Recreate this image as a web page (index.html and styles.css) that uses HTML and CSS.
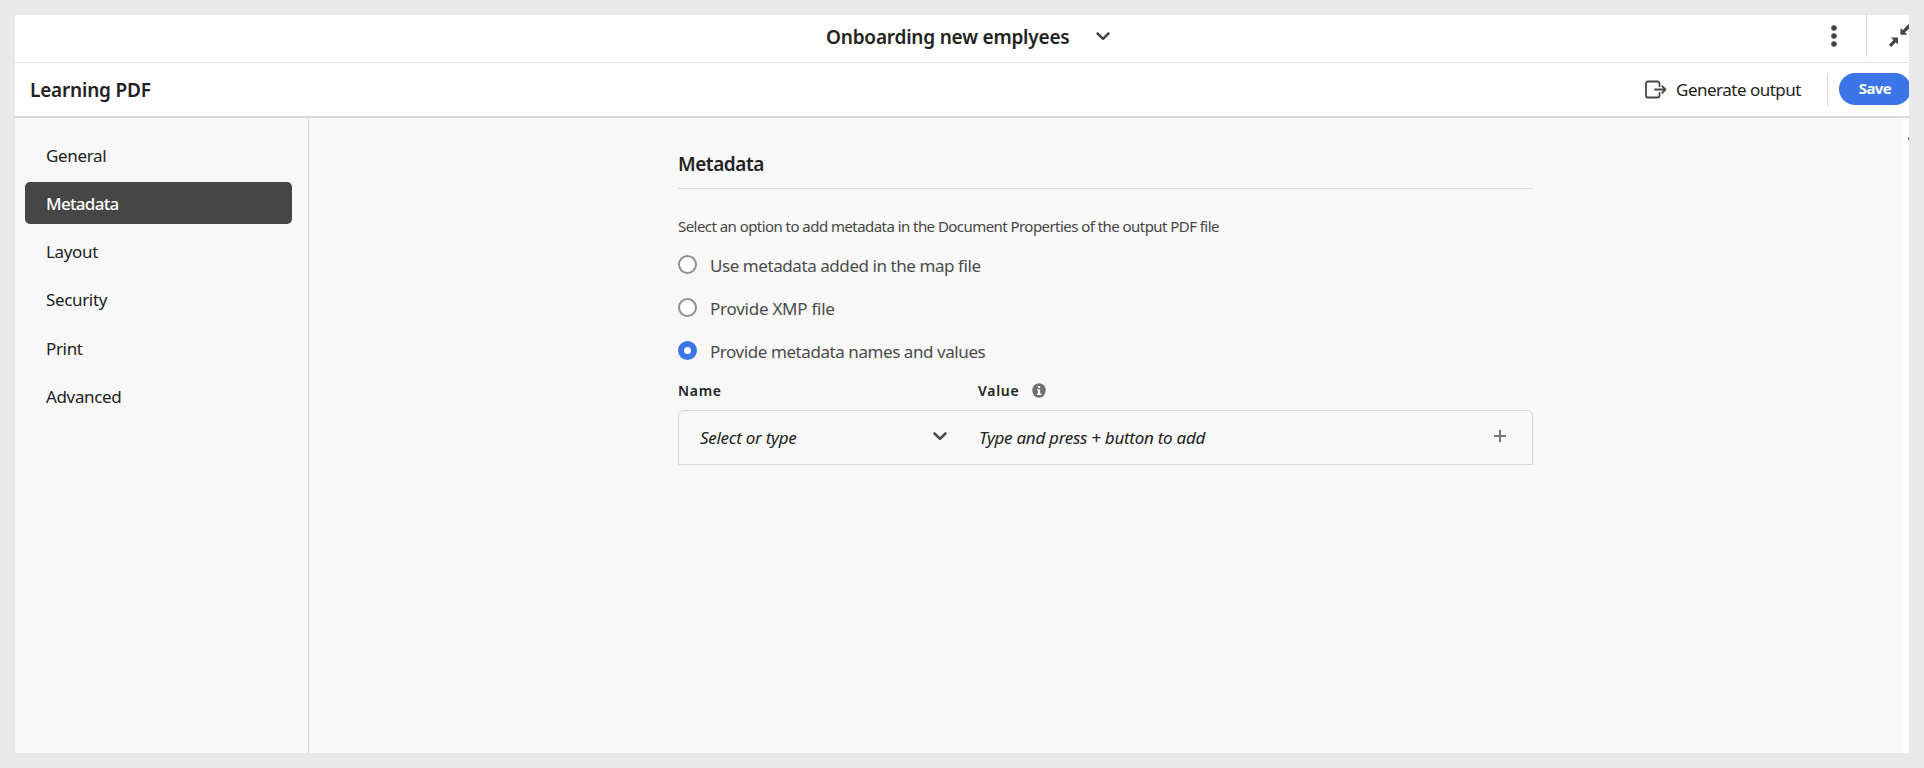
FILE: index.html
```html
<!DOCTYPE html>
<html lang="en">
<head>
<meta charset="utf-8">
<title>Learning PDF</title>
<link rel="stylesheet" href="styles.css">
</head>
<body>
<div class="frame">
  <header class="topbar">
    <div class="topbar-title">
      <span class="doc-name">Onboarding new emplyees</span>
      <svg class="chevron" width="14" height="9" viewBox="0 0 14 9"><path d="M1.600 1.500 7 6.900l5.400-5.400"/></svg>
    </div>
    <div class="topbar-actions">
      <svg class="dots" width="6" height="22" viewBox="0 0 6 22"><circle cx="3" cy="3" r="2.8"/><circle cx="3" cy="11" r="2.8"/><circle cx="3" cy="19" r="2.8"/></svg>
      <span class="divider tall"></span>
      <svg class="collapse" width="20" height="22" viewBox="0 0 20 22"><path d="M2 10.500h7v7L6.800 15.300 2.200 20 0 17.800 4.400 13z"/><path d="M11.500 1v6.800h6.800L16 5.500 22 -.5 19.500-3 13.700 3.200z"/></svg>
    </div>
  </header>
  <div class="toolbar">
    <h1 class="preset">Learning PDF</h1>
    <div class="toolbar-actions">
      <svg class="output-icon" width="22" height="20" viewBox="0 0 22 20"><path d="M14.500 6V3.500a2 2 0 0 0-2-2H3a2 2 0 0 0-2 2v12a2 2 0 0 0 2 2h9.500a2 2 0 0 0 2-2V13"/><path d="M10 9.500H20.500M17.200 6.200 20.500 9.500l-3.300 3.300"/></svg>
      <span class="generate">Generate output</span>
      <span class="divider short"></span>
      <button class="save">Save</button>
    </div>
  </div>
  <div class="body">
    <nav class="sidebar">
      <a class="item">General</a>
      <a class="item active">Metadata</a>
      <a class="item">Layout</a>
      <a class="item">Security</a>
      <a class="item">Print</a>
      <a class="item">Advanced</a>
    </nav>
    <main class="content">
      <section class="panel">
        <h2 class="heading">Metadata</h2>
        <p class="hint">Select an option to add metadata in the Document Properties of the output PDF file</p>
        <div class="options">
          <label class="option"><span class="radio"></span><span class="label">Use metadata added in the map file</span></label>
          <label class="option"><span class="radio"></span><span class="label short-label">Provide XMP file</span></label>
          <label class="option"><span class="radio checked"></span><span class="label">Provide metadata names and values</span></label>
        </div>
        <div class="columns">
          <span class="col-name">Name</span>
          <span>Value</span>
          <svg class="info" width="14" height="15" viewBox="0 0 14 15"><ellipse cx="7" cy="7.500" rx="6.700" ry="7.300"/><path d="M5.900 2.900h2.300v2H5.900zM5 6.200h3.200v4.300H9.400V12H4.900v-1.500H6V7.600H5z" fill="#f8f8f8"/></svg>
        </div>
        <div class="row">
          <div class="select"><span>Select or type</span><svg class="chevron" width="14" height="9" viewBox="0 0 14 9"><path d="M1.600 1.500 7 6.900l5.400-5.400"/></svg></div>
          <span class="value">Type and press + button to add</span>
          <svg class="plus" width="12" height="12" viewBox="0 0 12 12"><path d="M6 0v12M0 6h12"/></svg>
        </div>
      </section>
    </main>
    <div class="scroll"><span class="scroll-mark"></span></div>
  </div>
</div>
</body>
</html>
```

FILE: styles.css
```css
* { box-sizing: border-box; }
body {
  margin: 0;
  height: 768px;
  padding: 15px;
  background: #e9e9e9;
  color: #222;
  font-family: "Noto Sans", "Open Sans", sans-serif;
  font-size: 17px;
  overflow: hidden;
}
h1, h2, p { margin: 0; }
svg { display: block; flex: none; }
.frame {
  width: 1894px;
  height: 738px;
  display: flex;
  flex-direction: column;
  background: #fff;
  overflow: hidden;
  white-space: nowrap;
}
.topbar {
  height: 48px;
  flex: none;
  display: flex;
  justify-content: space-between;
  border-bottom: 1px solid #e1e1e1;
}
.topbar-title {
  display: flex;
  align-items: center;
  height: 43px;
  padding-left: 811px;
}
.doc-name {
  width: 270px;
  font-size: 19px;
  font-weight: 600;
  letter-spacing: -0.2px;
}
.chevron { fill: none; stroke: #464646; stroke-width: 2.5; stroke-linecap: round; stroke-linejoin: round; }
.topbar-actions { display: flex; align-items: flex-start; }
.dots { fill: #464646; margin: 10px 29px 0 0; }
.divider { width: 1px; background: #d5d5d5; flex: none; }
.divider.tall { height: 42px; margin-right: 22px; }
.collapse { fill: #464646; margin-top: 12px; overflow: visible; }
.toolbar {
  height: 55px;
  flex: none;
  display: flex;
  justify-content: space-between;
  align-items: center;
  padding-left: 15px;
  border-bottom: 2px solid #dadada;
}
.preset { font-size: 19px; font-weight: 600; letter-spacing: -0.2px; }
.toolbar-actions { display: flex; align-items: center; margin-right: -2px; }
.output-icon { fill: none; stroke: #464646; stroke-width: 1.8; stroke-linecap: round; stroke-linejoin: round; margin-right: 9px; }
.generate { width: 151px; letter-spacing: -0.5px; }
.divider.short { height: 32px; margin-right: 11px; }
.save {
  width: 72px;
  height: 32px;
  margin-bottom: 1px;
  border: 0;
  border-radius: 16px;
  padding: 0 0 2px;
  background: #3b75e8;
  color: #fff;
  font: 700 15px "Noto Sans", sans-serif;
  letter-spacing: -0.6px;
}
.body { flex: 1; display: flex; background: #f8f8f8; }
.sidebar {
  width: 294px;
  border-right: 1px solid #d6d6d6;
  padding: 16px 16px 0 10px;
  display: flex;
  flex-direction: column;
  gap: 6.15px;
}
.item { height: 42px; line-height: 43px; padding-left: 21px; border-radius: 5px; letter-spacing: -0.35px; }
.item.active { background: #464646; color: #fff; font-weight: 500; letter-spacing: -0.7px; }
.content { flex: 1; padding-left: 369px; }
.panel { width: 855px; }
.heading {
  height: 71px;
  padding-top: 33px;
  line-height: 26px;
  font-size: 19px;
  font-weight: 600;
  letter-spacing: -0.45px;
  border-bottom: 1px solid #d9d9d9;
}
.hint { margin-top: 25px; line-height: 24px; font-size: 15px; color: #464646; letter-spacing: -0.55px; }
.options { padding-top: 5px; }
.option { height: 43px; display: flex; align-items: center; gap: 13px; color: #4b4b4b; letter-spacing: -0.43px; }
.label { padding-top: 1px; }
.short-label { letter-spacing: -0.25px; }
.radio { width: 19px; height: 19px; margin-top: -1px; border: 2px solid #909090; border-radius: 50%; background: #fff; }
.radio.checked { border: 6px solid #3b75e8; }
.columns { display: flex; align-items: center; height: 38px; padding-bottom: 2px; font-size: 14px; font-weight: 600; letter-spacing: 0.7px; }
.col-name { width: 300px; }
.info { fill: #6e6e6e; margin-left: 13px; }
.row {
  height: 55px;
  display: flex;
  align-items: center;
  border: 1px solid #d9d9d9;
  border-radius: 6px 6px 0 0;
  padding: 0 26px 1px 21px;
  font-style: italic;
  letter-spacing: -0.28px;
}
.select { width: 279px; display: flex; align-items: center; justify-content: space-between; padding-right: 32px; }
.value { flex: 1; }
.row .chevron, .plus { margin-bottom: 2px; }
.plus { fill: none; stroke: #777; stroke-width: 2; }
.scroll { width: 7px; background: #fdfdfd; }
.scroll-mark { display: block; width: 1px; height: 3px; margin: 19px 0 0 6px; background: #777; }
```
